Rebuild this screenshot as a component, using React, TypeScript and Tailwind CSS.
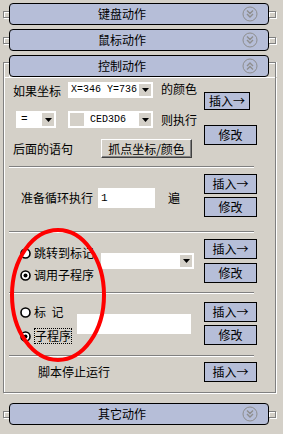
import React from 'react';

const cjk = "font-['SimSun','Noto_Sans_CJK_SC',sans-serif]";
const mono = "font-['Liberation_Mono',monospace]";
const etched = 'border-[#808080] shadow-[inset_1px_1px_0_#fff,1px_1px_0_#fff]';

const Chevron = ({ up }: { up?: boolean }) => (
  <svg width="16" height="16" viewBox="0 0 16 16">
    <circle cx="8" cy="8" r="7" fill="none" stroke="#8e8e8e" />
    <path
      d={up ? 'M5 8l3-3 3 3M5 11.5l3-3 3 3' : 'M5 4.5l3 3 3-3M5 8l3 3 3-3'}
      fill="none"
      stroke="#8e8e8e"
      strokeWidth="1.4"
    />
  </svg>
);

const Bar = ({ title, up }: { title: string; up?: boolean }) => (
  <div className="w-[260px] h-[22px] shrink-0 rounded-[4px] border border-black bg-[#b6bed8] flex items-center">
    <span className="ml-[88px] text-[12px] leading-none text-black">{title}</span>
    <span className="ml-auto mr-[10px] flex">
      <Chevron up={up} />
    </span>
  </div>
);

const Collapsed = ({ title }: { title: string }) => (
  <div className="flex items-center h-[22px]">
    <div className={`ml-[3px] w-[6px] h-[7px] border border-r-0 ${etched}`} />
    <Bar title={title} />
    <div className={`w-[7px] h-[7px] border border-l-0 ${etched}`} />
  </div>
);

const Btn = ({ children, w = 'w-[53px]', h = 'h-[20px]', className = '' }: { children: React.ReactNode; w?: string; h?: string; className?: string }) => (
  <div className={`${w} ${h} ${className} border border-black bg-[#b6bed8] flex items-center justify-center text-[12px] leading-none`}>
    {children}
  </div>
);

const Arrow = () => (
  <div className="w-[12px] h-full bg-[#d4d0c8] flex items-center justify-center">
    <svg width="7" height="4" viewBox="0 0 7 4">
      <path d="M0 0h7L3.5 4z" fill="#000" />
    </svg>
  </div>
);

const Select = ({ w, children }: { w: string; children?: React.ReactNode }) => (
  <div className={`${w} h-full bg-white p-[2px] flex items-stretch`}>
    <div className="flex-1 flex items-center overflow-hidden">{children}</div>
    <Arrow />
  </div>
);

const Radio = ({ checked }: { checked?: boolean }) => (
  <svg width="11" height="11" viewBox="0 0 11 11" className="shrink-0">
    <circle cx="5.5" cy="5.5" r="4.5" fill="#fff" stroke="#000" strokeWidth="1.6" />
    {checked && <circle cx="5.5" cy="5.5" r="2" fill="#000" />}
  </svg>
);

const Sep = ({ mt }: { mt: string }) => (
  <div className={`${mt} ml-[5px] w-[245px] h-[2px] border-t border-[#808080] border-b border-b-white`} />
);

export default function App() {
  return (
    <div className={`relative w-[283px] h-[434px] overflow-hidden bg-[#d4d0c8] pt-[3px] text-black ${cjk}`}>
      <Collapsed title="键盘动作" />
      <div className="mt-[4px]">
        <Collapsed title="鼠标动作" />
      </div>

      {/* 控制动作 */}
      <div className="mt-[4px] flex items-end h-[22px]">
        <div className={`ml-[3px] w-[6px] h-[15px] border-t border-l ${etched}`} />
        <Bar title="控制动作" up />
        <div className="w-[7px] h-[15px] border-t border-r border-[#808080] shadow-[inset_0_1px_0_#fff,1px_0_0_#fff]" />
      </div>
      <div className={`ml-[3px] w-[273px] h-[316px] border-l border-r border-b ${etched} text-[12px] leading-none`}>
        {/* block 1 */}
        <div className="flex">
          <div className="w-[196px] flex flex-col">
            <div className="mt-[5px] h-[16px] flex items-center">
              <span className="w-[64px] pl-[9px] pt-[2px]">如果坐标</span>
              <Select w="w-[85px]">
                <span className={`${mono} text-[10px] pl-[1px]`}>X=346 Y=736</span>
              </Select>
              <span className="ml-[8px] -mt-[2px]">的颜色</span>
            </div>
            <div className="mt-[13px] h-[17px] flex items-center">
              <div className="ml-[12px] h-full">
                <Select w="w-[40px]">
                  <span className={`${mono} text-[11px] pl-[3px]`}>=</span>
                </Select>
              </div>
              <div className="ml-[12px] h-full">
                <Select w="w-[85px]">
                  <div className="w-[14px] h-full bg-[#d4d0c8]" />
                  <span className={`${mono} text-[10px] ml-[6px]`}>CED3D6</span>
                </Select>
              </div>
              <span className="ml-[8px]">则执行</span>
            </div>
            <div className="mt-[11px] h-[19px] flex items-center">
              <span className="w-[97px] pl-[9px]">后面的语句</span>
              <div className="w-[91px] h-full bg-[#d4d0c8] border border-t-white border-l-white border-r-[#404040] border-b-[#404040] shadow-[inset_-1px_-1px_0_#808080] flex items-center justify-center">
                抓点坐标/颜色
              </div>
            </div>
          </div>
          <div className="ml-[4px] flex flex-col">
            <Btn w="w-[46px]" h="h-[18px]" className="mt-[15px]">插入→</Btn>
            <Btn className="mt-[15px]">修改</Btn>
          </div>
        </div>
        <Sep mt="mt-[8px]" />

        {/* block 2 */}
        <div className="flex h-[63px]">
          <div className="w-[196px]">
            <div className="mt-[20px] h-[20px] flex items-center">
              <span className="w-[94px] pl-[17px]">准备循环执行</span>
              <div className="w-[57px] h-full bg-white flex items-center">
                <span className={`${mono} text-[11px] pl-[3px]`}>1</span>
              </div>
              <span className="ml-[13px]">遍</span>
            </div>
          </div>
          <div className="ml-[4px] flex flex-col">
            <Btn className="mt-[6px]">插入→</Btn>
            <Btn className="mt-[3px]">修改</Btn>
          </div>
        </div>
        <Sep mt="mt-0" />

        {/* block 3 */}
        <div className="flex h-[59px]">
          <div className="w-[196px] flex">
            <div className="w-[97px] flex flex-col pl-[16px]">
              <div className="mt-[12px] h-[16px] flex items-center gap-[3px]">
                <Radio />
                <span>跳转到标记</span>
              </div>
              <div className="mt-[6px] h-[16px] flex items-center gap-[3px]">
                <Radio checked />
                <span>调用子程序</span>
              </div>
            </div>
            <div className="mt-[20px] h-[16px]">
              <Select w="w-[93px]" />
            </div>
          </div>
          <div className="ml-[4px] flex flex-col">
            <Btn className="mt-[6px]">插入→</Btn>
            <Btn className="mt-[4px]">修改</Btn>
          </div>
        </div>
        <Sep mt="mt-0" />

        {/* block 4 */}
        <div className="flex h-[61px]">
          <div className="w-[196px] flex">
            <div className="w-[73px] flex flex-col pl-[16px]">
              <div className="mt-[10px] h-[16px] flex items-center gap-[3px]">
                <Radio />
                <span>标&nbsp;&nbsp;记</span>
              </div>
              <div className="mt-[8px] h-[16px] flex items-center gap-[3px]">
                <Radio checked />
                <span className="border border-dotted border-black px-[0px] py-[1px]">子程序</span>
              </div>
            </div>
            <div className="mt-[20px] w-[114px] h-[20px] bg-white" />
          </div>
          <div className="ml-[4px] flex flex-col">
            <Btn className="mt-[8px]">插入→</Btn>
            <Btn className="mt-[3px]">修改</Btn>
          </div>
        </div>
        <Sep mt="mt-0" />

        {/* block 5 */}
        <div className="flex">
          <div className="w-[196px] flex items-center h-[30px] pl-[34px]">脚本停止运行</div>
          <div className="ml-[4px] flex flex-col">
            <Btn className="mt-[5px]">插入→</Btn>
          </div>
        </div>
      </div>

      <div className="mt-[10px]">
        <Collapsed title="其它动作" />
      </div>

      {/* red annotation ellipse */}
      <svg className="absolute left-0 top-0 pointer-events-none" width="283" height="434" viewBox="0 0 283 434">
        <ellipse cx="58" cy="295" rx="46" ry="65" fill="none" stroke="#ff0000" strokeWidth="4" />
      </svg>
    </div>
  );
}
